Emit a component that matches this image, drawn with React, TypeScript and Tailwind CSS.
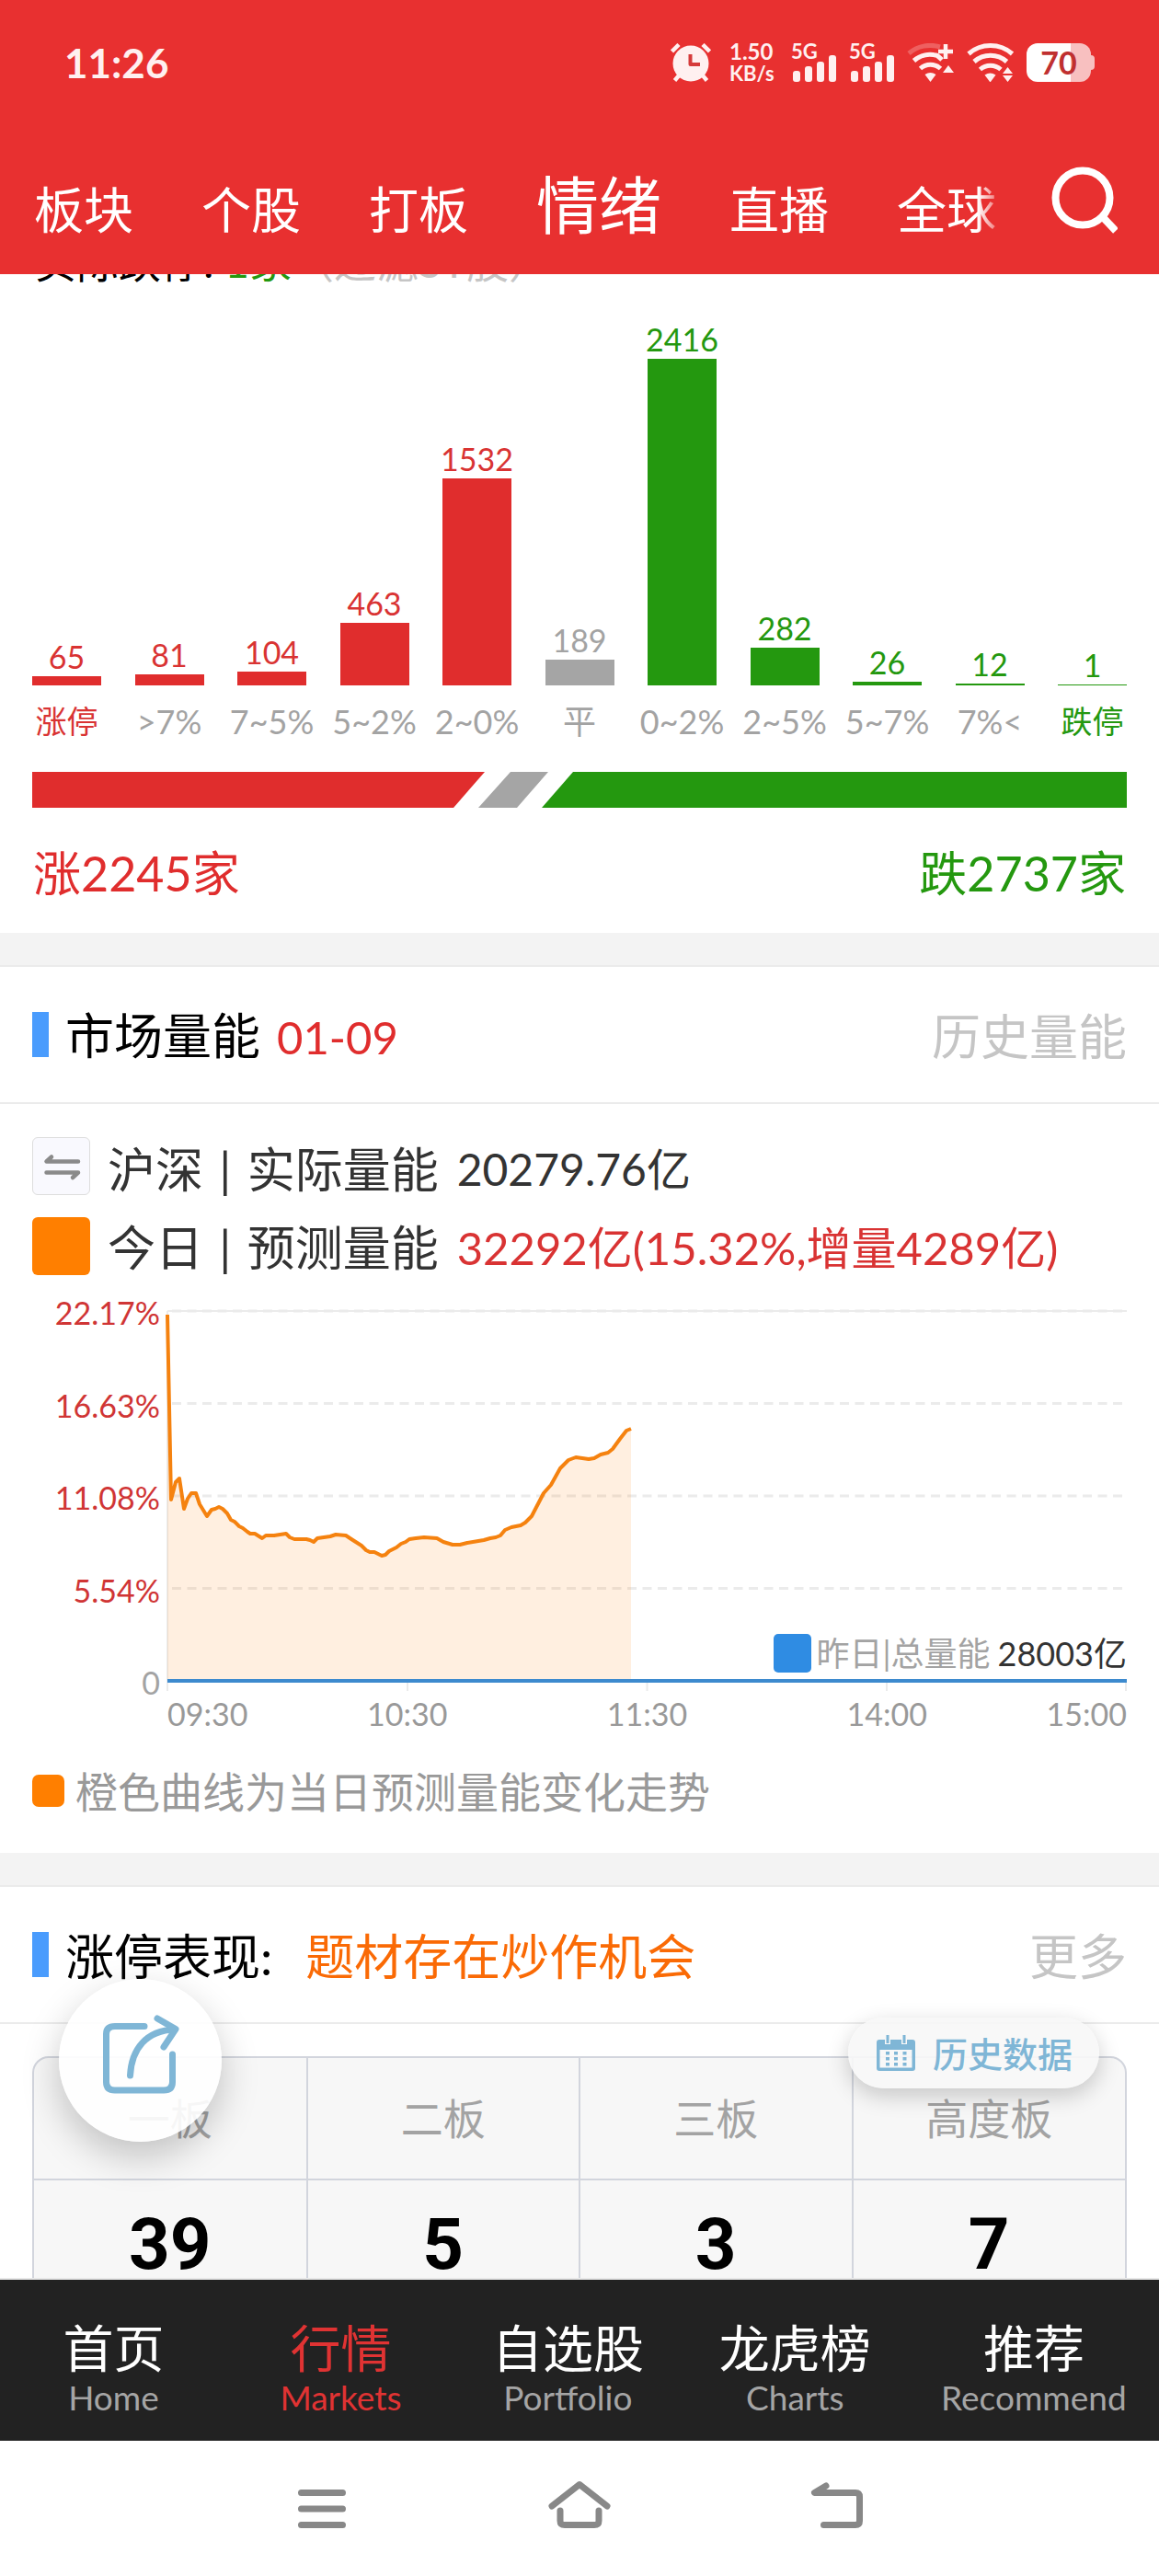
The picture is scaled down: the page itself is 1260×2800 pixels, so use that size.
import React from "react";

const TABS = ["板块", "个股", "打板", "情绪", "直播", "全球"];

type Tone = "up" | "flat" | "down";

const BARS: { label: string; value: number; tone: Tone; strong?: boolean }[] = [
  { label: "涨停", value: 65, tone: "up", strong: true },
  { label: ">7%", value: 81, tone: "up" },
  { label: "7~5%", value: 104, tone: "up" },
  { label: "5~2%", value: 463, tone: "up" },
  { label: "2~0%", value: 1532, tone: "up" },
  { label: "平", value: 189, tone: "flat" },
  { label: "0~2%", value: 2416, tone: "down" },
  { label: "2~5%", value: 282, tone: "down" },
  { label: "5~7%", value: 26, tone: "down" },
  { label: "7%<", value: 12, tone: "down" },
  { label: "跌停", value: 1, tone: "down", strong: true },
];

const TEXT_TONE: Record<Tone, string> = {
  up: "text-[#d93333]",
  flat: "text-[#a3a3a3]",
  down: "text-[#24980f]",
};

const BG_TONE: Record<Tone, string> = {
  up: "bg-[#e02d2d]",
  flat: "bg-[#a5a5a5]",
  down: "bg-[#24980f]",
};

const MAX_BAR = 355;
const MAX_VALUE = 2416;

// forecast curve, in plot units (1043 x 402)
const CURVE =
  "0,4 4,205 9,186 13,182 18,215 22,204 26,198 31,198 35,210 43,223 48,216 52,215 56,213 60,215 65,220 69,227 73,229 78,234 82,236 87,240 90,242 95,242 103,247 107,244 116,244 129,242 133,246 138,248 151,248 155,249 159,251 163,247 177,245 183,243 194,244 200,248 211,255 216,260 220,262 225,262 233,266 237,265 241,261 249,257 254,253 259,251 263,248 270,247 279,246 293,247 300,251 310,254 318,254 326,252 344,249 351,247 357,246 362,244 367,238 374,235 384,233 389,230 396,223 409,198 417,189 427,171 436,162 444,159 458,161 464,160 471,156 479,154 484,150 492,139 499,130 504,128";

const Y_LABELS = ["22.17%", "16.63%", "11.08%", "5.54%", "0"];

const BOARDS = [
  { name: "一板", count: 39 },
  { name: "二板", count: 5 },
  { name: "三板", count: 3 },
  { name: "高度板", count: 7 },
];

const NAV = [
  { zh: "首页", en: "Home" },
  { zh: "行情", en: "Markets", active: true },
  { zh: "自选股", en: "Portfolio" },
  { zh: "龙虎榜", en: "Charts" },
  { zh: "推荐", en: "Recommend" },
];

function AlarmIcon() {
  return (
    <svg width="44" height="42" viewBox="0 0 44 42" fill="none" strokeLinecap="butt">
      <circle cx="22" cy="22" r="19.5" fill="#fff0f0" />
      <path d="M1.5 9 9 1.5M42.5 9 35 1.5" stroke="#fff0f0" strokeWidth="4.5" />
      <path d="M10 34 4.5 40.5M34 34 39.500 40.5" stroke="#fff0f0" strokeWidth="4.5" />
      <path d="M21.500 12V23H32" stroke="#d63a3a" strokeWidth="4" strokeLinejoin="round" />
    </svg>
  );
}

function Signal() {
  return (
    <div className="flex h-[42px] w-[50px] flex-col text-[22px] leading-[18px] font-bold">
      <span>5G</span>
      <svg width="50" height="30" viewBox="0 0 50 30" fill="#fff0f0" className="-mt-[6px] shrink-0">
        <rect x="2" y="18" width="8" height="12" rx="3" />
        <rect x="15" y="13" width="8" height="17" rx="3" />
        <rect x="28" y="8" width="8" height="22" rx="3" />
        <rect x="41" y="1" width="8" height="29" rx="3" />
      </svg>
    </div>
  );
}

function WifiPlusIcon() {
  return (
    <svg width="52" height="42" viewBox="0 0 52 42" fill="none" stroke="#fff0f0" strokeWidth="5">
      <path d="M2 11A36 36 0 0 1 36 4" opacity="0.25" />
      <path d="M7.500 19A27 27 0 0 1 33 13.500Q36 16 38 18" />
      <path d="M14.500 27.500A16.500 16.500 0 0 1 36.500 27.500" />
      <path d="M42 1V17M34 9H50" strokeWidth="4.5" />
      <path d="M19.500 34Q25.500 30 31.500 34L25.500 42ZM39 32H51L45 24Z" fill="#fff0f0" stroke="none" />
    </svg>
  );
}

function WifiIcon() {
  return (
    <svg width="52" height="42" viewBox="0 0 52 42" fill="none" stroke="#fff0f0" strokeWidth="5">
      <path d="M2 11.500A36 36 0 0 1 49.500 11.500" />
      <path d="M8 20A27 27 0 0 1 43.500 20" />
      <path d="M14.500 28.500A17 17 0 0 1 37 28.500" />
      <path d="M19.500 34.500Q25.500 30.500 31.500 34.500L25.500 42.500Z" fill="#fff0f0" stroke="none" />
      <path d="M39 33H50L44.500 26ZM39 35H50L44.500 42Z" fill="#fff0f0" stroke="none" />
    </svg>
  );
}

function Battery() {
  return (
    <div className="flex items-center">
      <div className="flex h-[42px] w-[70px] items-center justify-center rounded-[12px] bg-[linear-gradient(to_right,#ffffff_48px,#f8c0c0_48px)] text-[34px] leading-[42px] font-bold text-[#c03030]">
        70
      </div>
      <div className="h-4 w-1 rounded-r-sm bg-[#f8c0c0]" />
    </div>
  );
}

function Header() {
  return (
    <header className="shrink-0 bg-[#e83030] text-white">
      <div className="flex h-[136px] items-center justify-between px-[70px] text-[#fff0f0]">
        <time className="text-[44px] leading-[46px] font-bold">11:26</time>
        <div className="flex items-center gap-[13px]">
          <AlarmIcon />
          <div className="ml-[7px] flex w-[54px] flex-col font-bold">
            <span className="text-[24px] leading-6">1.50</span>
            <span className="text-[22px] leading-6">KB/s</span>
          </div>
          <Signal />
          <Signal />
          <WifiPlusIcon />
          <WifiIcon />
          <Battery />
        </div>
      </div>
      <div className="flex h-[162px]">
        <nav className="flex min-w-0 flex-1 items-baseline gap-[74px] overflow-hidden [mask-image:linear-gradient(to_right,black_calc(100%-32px),transparent)] pt-[52px] pl-[37px]">
          {TABS.map((tab) => (
            <a
              key={tab}
              href="#"
              className={
                tab === "情绪"
                  ? "shrink-0 text-[68px] leading-[70px]"
                  : "shrink-0 text-[54px] leading-[56px]"
              }
            >
              {tab}
            </a>
          ))}
        </nav>
        <button aria-label="搜索" className="flex w-[165px] shrink-0 justify-center pt-[45px]">
          <svg width="74" height="74" viewBox="0 0 74 74" fill="none" stroke="#fff" strokeWidth="8">
            <circle cx="36" cy="34" r="29.500" />
            <path d="M56 53 72 70" />
          </svg>
        </button>
      </div>
    </header>
  );
}

function Distribution() {
  return (
    <section className="px-[35px] pb-10">
      {/* list is scrolled, so this line is half under the header */}
      <p className="-mt-[36px] pl-0.5 text-[46px] leading-[46px] text-black">
        实际跌停: <span className="text-[#24980f]">1家</span>
        <span className="text-[#c5c5c5]">（过滤ST股）</span>
      </p>
      <div className="mt-11 flex items-end justify-between text-[34px] leading-[34px]">
        {BARS.map((bar) => (
          <div key={bar.label} className="flex w-[75px] flex-col items-center whitespace-nowrap">
            <span className={TEXT_TONE[bar.tone]}>{bar.value}</span>
            <div
              className={`mt-1 w-full ${BG_TONE[bar.tone]}`}
              style={{ height: Math.max(1, Math.round((bar.value / MAX_VALUE) * MAX_BAR)) }}
            />
            <span
              className={`mt-[22px] ${bar.strong ? TEXT_TONE[bar.tone] : "text-[36px] text-[#a3a3a3]"}`}
            >
              {bar.label}
            </span>
          </div>
        ))}
      </div>
      <svg viewBox="0 0 1190 39" preserveAspectRatio="none" className="mt-[38px] block h-[39px] w-full">
        <path d="M0 0H492L458 39H0Z" fill="#e02d2d" />
        <path d="M520 0H561L527 39H485Z" fill="#a5a5a5" />
        <path d="M588 0H1190V39H554Z" fill="#24980f" />
      </svg>
      <div className="mt-[46px] flex justify-between px-px text-[52px] leading-[50px]">
        <span className="text-[#e02d2d]">涨2245家</span>
        <span className="text-[#24980f]">跌2737家</span>
      </div>
    </section>
  );
}

function SectionTitle({ children, more }: { children: React.ReactNode; more: string }) {
  return (
    <>
      <div className="h-[37px] border-b-2 border-[#ebebeb] bg-[#f3f3f3]" />
      <div className="flex h-[149px] items-center border-b-2 border-[#ebebeb] px-[35px] text-[53px] leading-[53px]">
        <span className="h-[49px] w-[18px] bg-[#4a9cfd]" />
        <h2 className="ml-[18px] flex flex-1 items-baseline pt-[3px] text-black">{children}</h2>
        <a href="#" className="pt-[3px] text-[#c5c5c5]">
          {more}
        </a>
      </div>
    </>
  );
}

function VolumeChart() {
  return (
    <div className="mt-[22px] flex text-[34px] leading-[34px]">
      <div className="flex h-[438px] w-[147px] flex-col justify-between pt-0.5 pr-2 text-right text-[#d03535]">
        {Y_LABELS.map((label) => (
          <span key={label} className={label === "0" ? "text-[#a3a3a3]" : ""}>
            {label}
          </span>
        ))}
      </div>
      <div className="relative min-w-0 flex-1 pt-[17px]">
        <svg viewBox="0 0 1043 419" preserveAspectRatio="none" className="block h-[419px] w-full overflow-visible">
          <g stroke="#ebebeb" strokeWidth="3">
            <path d="M0 0H1043" strokeWidth="2" />
            {[0, 100.5, 201, 301.5].map((y) => (
              <path key={y} d={`M5 ${y}H1043`} strokeDasharray="10 6.5" />
            ))}
            <path d="M0 0V413M261 402V413M521.500 402V413M782 402V413M1042 402V413" strokeWidth="2" />
          </g>
          <polygon points={`0,402 ${CURVE} 504,402`} fill="#ff7f00" fillOpacity="0.12" />
          <polyline points={CURVE} fill="none" stroke="#f5820f" strokeWidth="4" strokeLinejoin="round" />
          <path d="M0 402H1043" stroke="#3d8ace" strokeWidth="4" />
        </svg>
        <div className="mt-0.5 grid grid-cols-8 text-center text-[#999999]">
          <span className="text-left">09:30</span>
          <span className="col-span-2">10:30</span>
          <span className="col-span-2">11:30</span>
          <span className="col-span-2">14:00</span>
          <span className="text-right">15:00</span>
        </div>
        <div className="absolute top-[368px] right-0 flex items-center text-[36px] text-[#a3a3a3]">
          <span className="mr-1.5 h-[42px] w-[41px] rounded-[5px] bg-[#2f8ce3]" />
          昨日|总量能
          <span className="ml-2 text-[#333333]">28003亿</span>
        </div>
      </div>
    </div>
  );
}

function Volume() {
  return (
    <section>
      <SectionTitle more="历史量能">
        市场量能<time className="ml-[18px] text-[49px] text-[#e02d2d]">01-09</time>
      </SectionTitle>
      <div className="px-[35px] pt-9 pb-[43px]">
        <div className="flex flex-col gap-6 text-[52px] leading-[66px] whitespace-nowrap text-[#333333]">
          <div className="flex h-[63px]">
            <button
              aria-label="切换市场"
              className="mr-[19px] size-[63px] rounded-[6px] border border-[#dddddd] bg-[#f9f9fe]"
            >
              <svg width="61" height="61" viewBox="0 0 61 61" fill="none" stroke="#8a8a8a" strokeWidth="4.5" strokeLinecap="round" strokeLinejoin="round">
                <path d="M20 20.500 14.500 25.500H49" />
                <path d="M14.500 37.500H49L43 43" />
              </svg>
            </button>
            <span className="pt-0.5">
              沪深<span className="mx-1"> | </span>实际量能
            </span>
            <span className="ml-5 pt-0.5 text-[48px]">20279.76亿</span>
          </div>
          <div className="flex h-[63px]">
            <span className="mr-[19px] size-[63px] rounded-[6px] bg-[#ff7f00]" />
            <span>
              今日<span className="mx-1"> | </span>预测量能
            </span>
            <span className="ml-5 text-[49px] text-[#d93333]">32292亿(15.32%,增量4289亿)</span>
          </div>
        </div>
        <VolumeChart />
        <p className="mt-[42px] flex items-center text-[46px] leading-[46px] text-[#999999]">
          <span className="mr-3 size-[35px] rounded-[7px] bg-[#ff7f00]" />
          <span className="pt-[3px]">橙色曲线为当日预测量能变化走势</span>
        </p>
      </div>
    </section>
  );
}

function LimitUp() {
  return (
    <section>
      <SectionTitle more="更多">
        涨停表现:<span className="ml-9 text-[#fa6a05]">题材存在炒作机会</span>
      </SectionTitle>
      <div className="px-[35px] pt-[35px]">
        <div className="overflow-hidden rounded-[18px] border-2 border-[#d2d5dd] bg-[#f7f7f7]">
          <table className="w-full table-fixed border-collapse text-center">
            <thead>
              <tr className="h-[132px] border-b-2 border-[#d2d5dd] text-[46px] leading-[46px] text-[#a3a3a3]">
                {BOARDS.map((b) => (
                  <th key={b.name} scope="col" className="border-l-2 border-[#d2d5dd] font-normal first:border-l-0">
                    {b.name}
                  </th>
                ))}
              </tr>
            </thead>
            <tbody>
              <tr className="h-[140px] font-['Roboto'] text-[78px] leading-[78px] font-bold text-black">
                {BOARDS.map((b) => (
                  <td key={b.name} className="border-l-2 border-[#d2d5dd] first:border-l-0">
                    {b.count}
                  </td>
                ))}
              </tr>
            </tbody>
          </table>
        </div>
      </div>
    </section>
  );
}

function FloatingActions() {
  return (
    <>
      <button
        aria-label="分享"
        className="absolute bottom-[148px] left-16 flex size-[177px] items-center justify-center rounded-full bg-white/90 shadow-[0_16px_40px_rgba(0,0,0,0.22)]"
      >
        <svg width="84" height="90" viewBox="0 0 84 90" fill="none" stroke="#7fb6d6" strokeWidth="7" strokeLinecap="round" strokeLinejoin="round" className="-mt-3">
          <path d="M46 13.500H14Q4.500 13.500 4.500 22V74Q4.500 83 14 83H67Q76.500 83 76.500 74V44" />
          <path d="M30.500 67C32 38 48 18 79 17" />
          <path d="M60 5 80 16.500 67 36" />
        </svg>
      </button>
      <button className="absolute right-[65px] bottom-[206px] flex h-[77px] w-[273px] items-center rounded-full bg-[#f7f7f7]/90 pl-[31px] text-[38px] leading-[38px] font-medium text-[#7fb6d6] shadow-[0_8px_24px_rgba(0,0,0,0.2)]">
        <svg width="42" height="39" viewBox="0 0 42 39" className="mr-[19px]">
          <path d="M3 5H9V10H15V5H27V10H33V5H39Q42 5 42 8V36Q42 39 39 39H3Q0 39 0 36V8Q0 5 3 5ZM3.500 16V35.500H38.500V16Z" fill="#7fb6d6" fillRule="evenodd" />
          <path d="M10.500 0H13.500V9H10.500ZM28.500 0H31.500V9H28.500Z" fill="#7fb6d6" />
          <path d="M12 18V34M21 18V34M30.500 18V34" stroke="#7fb6d6" strokeWidth="4" strokeDasharray="3.500 2.500" />
        </svg>
        历史数据
      </button>
    </>
  );
}

function BottomNav() {
  return (
    <nav className="grid h-[177px] shrink-0 grid-cols-[repeat(4,19.6%)_1fr] border-t-2 border-[#e8e8e8] bg-[#222222] pt-[46px] text-center">
      {NAV.map((item) => (
        <a key={item.en} href="#" className={item.active ? "text-[#e03333]" : "text-white"}>
          <span className="block text-[55px] leading-[56px]">{item.zh}</span>
          <span
            className={`mt-2 block text-[37px] leading-[36px] ${item.active ? "" : "text-[#a5a5a5]"}`}
          >
            {item.en}
          </span>
        </a>
      ))}
    </nav>
  );
}

function SystemBar() {
  return (
    <div className="flex h-[147px] shrink-0 items-start justify-center gap-[216px] bg-white pt-[43px]">
      <button aria-label="最近任务">
        <svg width="60" height="56" viewBox="0 0 60 56" stroke="#888" strokeWidth="7" strokeLinecap="round">
          <path d="M7.500 13.500H52.500M7.500 31H52.500M7.500 48.500H52.500" />
        </svg>
      </button>
      <button aria-label="主页">
        <svg width="68" height="56" viewBox="0 0 68 56" fill="none" stroke="#888" strokeWidth="7" strokeLinecap="round" strokeLinejoin="round">
          <path d="M4 28 34 4.500 64 28" />
          <path d="M13 33V44Q13 48.500 18 48.500H50Q55 48.500 55 44V33" />
        </svg>
      </button>
      <button aria-label="返回">
        <svg width="60" height="56" viewBox="0 0 60 56" fill="none" stroke="#888" strokeWidth="7" strokeLinecap="round" strokeLinejoin="round">
          <path d="M18 6 5.500 13.500H50Q54.500 13.500 54.500 18V44Q54.500 48.500 50 48.500H15.500" />
        </svg>
      </button>
    </div>
  );
}

export default function App() {
  return (
    <div className="flex h-screen flex-col bg-white font-['Lato','Noto_Sans_CJK_SC',sans-serif]">
      <Header />
      <div className="relative min-h-0 flex-1 overflow-hidden">
        <main>
          <Distribution />
          <Volume />
          <LimitUp />
        </main>
        <FloatingActions />
      </div>
      <BottomNav />
      <SystemBar />
    </div>
  );
}
